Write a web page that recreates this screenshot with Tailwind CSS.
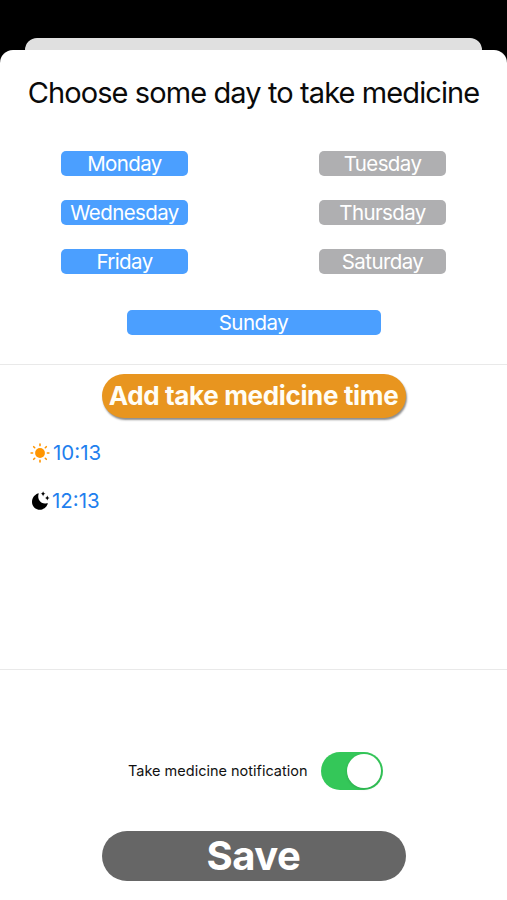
<!DOCTYPE html>
<html lang="en">
<head>
<meta charset="utf-8">
<title>Choose days</title>
<script src="https://cdn.jsdelivr.net/npm/@tailwindcss/browser@4"></script>
</head>
<body class="bg-black">
<div class="flex h-[900px] w-[507px] flex-col overflow-hidden bg-black pt-[38px] font-['Inter','Liberation_Sans',sans-serif]">
  <div class="mx-[25px] h-3 shrink-0 rounded-t-[12px] bg-[#e0e0e0]"></div>
  <main class="flex flex-1 flex-col rounded-t-[13px] bg-white">
    <h1 class="mt-[23px] text-center text-[29px] leading-[40px] tracking-[-0.9px] whitespace-nowrap text-[#0a0a0a]">Choose some day to take medicine</h1>
    <section class="mt-[37.5px] grid grid-cols-[127px_127px] justify-center gap-x-[131px] gap-y-[24.4px] text-center text-[20.5px] leading-[25px] tracking-[-0.6px] whitespace-nowrap text-white">
      <button class="h-[25px] rounded-[5px] bg-[#4b9fff]">Monday</button>
      <button class="h-[25px] rounded-[5px] bg-[#afafb1]">Tuesday</button>
      <button class="h-[25px] rounded-[5px] bg-[#4b9fff]">Wednesday</button>
      <button class="h-[25px] rounded-[5px] bg-[#afafb1]">Thursday</button>
      <button class="h-[25px] rounded-[5px] bg-[#4b9fff]">Friday</button>
      <button class="h-[25px] rounded-[5px] bg-[#afafb1]">Saturday</button>
    </section>
    <button class="mx-auto mt-[35.7px] h-[25px] w-[254px] rounded-[5px] bg-[#4b9fff] text-[20.5px] leading-[25px] tracking-[-0.5px] text-white">Sunday</button>
    <div class="mt-[29px] h-px bg-[#e9e9e9]"></div>
    <button class="mx-auto mt-[9.5px] h-[44px] w-[304px] rounded-full bg-[#e8951f] text-[26px] leading-[44px] font-bold tracking-[-0.35px] whitespace-nowrap text-[#fffdf5] shadow-[1px_2px_2px_rgba(0,0,0,0.45)]">Add take medicine time</button>
    <section class="mt-[20.5px] flex flex-col gap-[20px] pl-[30px] text-[20.5px] leading-[28px] text-[#1f80ee]">
      <div class="flex items-center">
        <svg class="mr-[3px] size-5" viewBox="0 0 20 20" fill="#ff9500" stroke="#ff9500" stroke-width="1.6" stroke-linecap="round"><circle cx="10" cy="10" r="4.9" stroke="none"/><path d="M10 1.1v1.5M10 17.4v1.5M1.1 10h1.5M17.4 10h1.5M3.7 3.7l1 1M15.3 15.3l1 1M3.7 16.3l1-1M15.3 4.7l1-1"/></svg>
        <span>10:13</span>
      </div>
      <div class="flex items-center">
        <svg class="mr-[2px] size-5" viewBox="0 0 20 20" fill="#000"><path d="M8.6 3C6.9 8.7 11.2 13.6 16.9 12.2C17.8 12 18 12.4 17.7 13.1C16.2 16.7 13.3 18.8 9.9 18.8C5.4 18.8 2 15.5 2 11.1C2 7.2 4.3 3.9 7.8 2.5C8.5 2.2 8.8 2.4 8.6 3Z"/><path d="M13.1 .2C13.6 2 14 2.4 15.6 2.8C14 3.2 13.6 3.6 13.1 5.4C12.6 3.6 12.2 3.2 10.6 2.8C12.2 2.4 12.6 2 13.1 .2ZM17.3 4.4C17.8 6.1 18.2 6.5 19.8 6.9C18.2 7.3 17.8 7.7 17.3 9.4C16.8 7.7 16.4 7.3 14.8 6.9C16.4 6.5 16.8 6.1 17.3 4.4Z"/></svg>
        <span>12:13</span>
      </div>
    </section>
    <div class="mt-[153.8px] h-px bg-[#e9e9e9]"></div>
    <div class="mt-[82px] flex h-[38px] items-center pl-[128px]">
      <span class="w-[193px] text-[14.5px] whitespace-nowrap text-[#111]">Take medicine notification</span>
      <div class="flex h-[38px] w-[62px] items-center justify-end rounded-full bg-[#34c759] pr-[2px]"><div class="size-[34px] rounded-full bg-white shadow-[0_1px_3px_rgba(0,0,0,0.15)]"></div></div>
    </div>
    <button class="mx-auto mt-[41px] h-[50px] w-[304px] rounded-full bg-[#666] text-[40px] leading-[50px] font-bold tracking-[-0.5px] text-white">Save</button>
  </main>
</div>
</body>
</html>
